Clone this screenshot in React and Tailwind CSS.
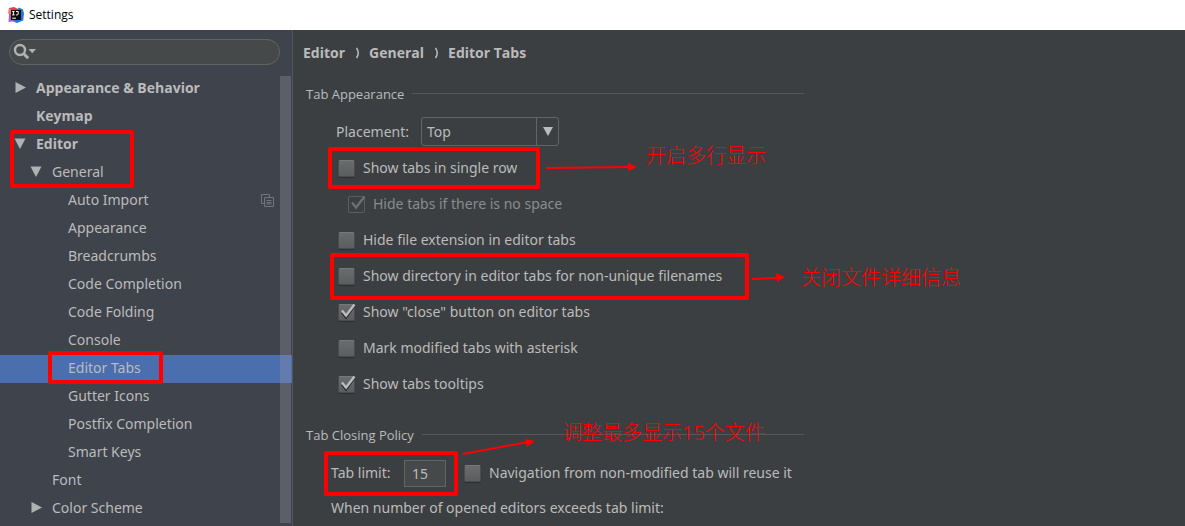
import { useState } from 'react';
import clsx from 'clsx';

const TREE = [
  { label: 'Appearance & Behavior', level: 0, state: 'closed' },
  { label: 'Keymap', level: 0 },
  { label: 'Editor', level: 0, state: 'open' },
  { label: 'General', level: 1, state: 'open' },
  { label: 'Auto Import', level: 2, project: true },
  { label: 'Appearance', level: 2 },
  { label: 'Breadcrumbs', level: 2 },
  { label: 'Code Completion', level: 2 },
  { label: 'Code Folding', level: 2 },
  { label: 'Console', level: 2 },
  { label: 'Editor Tabs', level: 2 },
  { label: 'Gutter Icons', level: 2 },
  { label: 'Postfix Completion', level: 2 },
  { label: 'Smart Keys', level: 2 },
  { label: 'Font', level: 1 },
  { label: 'Color Scheme', level: 1, state: 'closed' },
];

const INDENT = ['pl-3', 'pl-7', 'pl-11'];

const OPTIONS = [
  { id: 'single-row', label: 'Show tabs in single row' },
  { id: 'hide-tabs', label: 'Hide tabs if there is no space', checked: true, disabled: true },
  { id: 'hide-ext', label: 'Hide file extension in editor tabs' },
  { id: 'directory', label: 'Show directory in editor tabs for non-unique filenames' },
  { id: 'close', label: 'Show "close" button on editor tabs', checked: true },
  { id: 'asterisk', label: 'Mark modified tabs with asterisk' },
  { id: 'tooltips', label: 'Show tabs tooltips', checked: true },
];

function Logo() {
  return (
    <svg width="16" height="16" viewBox="0 0 16 16">
      <path d="M1 1 6 0l5 2.500-3 7-7-1z" fill="#f5315f" />
      <path d="M1 1 0 6l2 3 2-5z" fill="#fd7a6a" />
      <path d="M1 7 .5 15l4-.5L9 16l-1-8z" fill="#a866c4" />
      <path d="M8.500 3 11 .5l4 2 1 4-.8 7L9 16l-3-2z" fill="#2277e8" />
      <rect x="3" y="3" width="10" height="10" fill="#0b0b0e" />
      <path d="M4.200 4.500h2.400M5.400 4.500v3.400M4.200 7.900h2.400M8 4.500h2.200v2.500q0 .9-.9.9H7.900" stroke="#fff" strokeWidth="1" fill="none" />
      <path d="M4.200 11.200h3.800" stroke="#fff" strokeWidth="1" />
    </svg>
  );
}

function Arrow({ state }) {
  return (
    <svg width="16" height="16" viewBox="0 0 16 16" className="shrink-0" fill="#b0b1b3">
      {state === 'closed' && <path d="M3.500 2 14 7.500 3.500 13z" />}
      {state === 'open' && <path d="M2.500 2.500h11L8 13z" />}
    </svg>
  );
}

function ProjectIcon() {
  return (
    <svg width="13" height="13" viewBox="0 0 13 13" fill="none" stroke="#71757c">
      <path d="M3.500 9.500h-3v-9h8v3" />
      <path d="M3.500 3.500h9v9h-9zM5.500 6.500h5M5.500 8.500h5M5.500 10h5" />
    </svg>
  );
}

function Chevron() {
  return (
    <svg width="8" height="14" viewBox="0 0 8 14" fill="none" stroke="#bbbbbb" strokeWidth="1.500">
      <path d="M3.500 2q3.500 5 0 10" />
    </svg>
  );
}

function TreeRow({ item, selected, onSelect }) {
  return (
    <li>
      <button
        type="button"
        onClick={onSelect}
        className={clsx(
          'flex h-7 w-full items-center gap-2 pr-[18px] pb-0.5 text-left',
          INDENT[item.level],
          item.level === 0 && "font-['Open_Sans',sans-serif] font-bold",
          selected && 'bg-[#4b6eaf]'
        )}
      >
        <Arrow state={item.state} />
        <span className="flex-1">{item.label}</span>
        {item.project && <ProjectIcon />}
      </button>
    </li>
  );
}

function Checkbox({ id, label, checked, disabled }) {
  const [on, setOn] = useState(Boolean(checked));
  return (
    <div className={clsx('flex h-9 items-center gap-2', disabled && 'pl-[10px] text-[#8a8c8d]')}>
      <span className="relative size-[17px]">
        <input
          id={id}
          type="checkbox"
          checked={on}
          disabled={disabled}
          onChange={e => setOn(e.target.checked)}
          className={clsx(
            'block size-[17px] appearance-none rounded-xs border',
            disabled
              ? 'border-[#5b5e60]'
              : 'border-[#4a4c4e] border-t-[#75777a] bg-linear-to-b from-[#6a6b6c] to-[#5c5d5e] shadow-[0_1px_1px_#2d2f30]'
          )}
        />
        {on && (
          <svg width="18" height="18" viewBox="0 0 18 18" fill="none" className="pointer-events-none absolute -top-px left-0">
            {!disabled && <path d="M4 9.500 8 14.500 16.500 2.500" stroke="#2a2b2c" strokeWidth="2.400" />}
            <path d="M4 7.500 8 12.500 16.500 1.500" stroke={disabled ? '#6c6e70' : '#bdbdbd'} strokeWidth="2.400" />
          </svg>
        )}
      </span>
      <label htmlFor={id}>{label}</label>
    </div>
  );
}

function SectionTitle({ children }) {
  return (
    <div className="flex items-center gap-2">
      <h2 className="font-['Open_Sans',sans-serif] text-[13px] leading-5">{children}</h2>
      <span className="mb-0.5 h-px flex-1 bg-[#555759]" />
    </div>
  );
}

// red boxes, arrows and notes drawn over the dialog
function Annotations() {
  return (
    <div className="pointer-events-none absolute inset-0 text-[20px] leading-6 font-light text-[#ff0000]">
      <div className="absolute left-[10px] top-[130px] h-[58px] w-[124px] rounded-xs border-4 border-[#ff0000]" />
      <div className="absolute left-[48px] top-[351px] h-[33px] w-[115px] rounded-xs border-4 border-[#ff0000]" />
      <div className="absolute left-[328px] top-[147px] h-[42px] w-[212px] rounded-xs border-4 border-[#ff0000]" />
      <div className="absolute left-[330px] top-[253px] h-[47px] w-[419px] rounded-xs border-4 border-[#ff0000]" />
      <div className="absolute left-[324px] top-[451px] h-[45px] w-[134px] rounded-xs border-4 border-[#ff0000]" />
      <svg width="850" height="500" className="absolute left-0 top-0" stroke="#ff0000" strokeWidth="2" fill="#ff0000">
        <path d="M546 168 630 167M752 279 778 278M463 454 528 442" />
        <path stroke="none" d="M637 167 628 163v8zM785 277l-9-4 1 9zM535 441l-10-2 2 8z" />
      </svg>
      <p className="absolute left-[646px] top-[144px]">开启多行显示</p>
      <p className="absolute left-[801px] top-[266px]">关闭文件详细信息</p>
      <p className="absolute left-[562px] top-[421px]">调整最多显示15个文件</p>
    </div>
  );
}

export default function App() {
  const [selected, setSelected] = useState('Editor Tabs');
  const [limit, setLimit] = useState('15');

  return (
    <div className="relative flex min-h-screen flex-col bg-[#3c3f41] font-['Noto_Sans','Noto_Sans_CJK_SC',sans-serif] text-[14px] leading-5 text-[#bbbbbb]">
      <header className="flex h-[30px] items-center gap-[5px] bg-white pl-2 font-['Open_Sans',sans-serif] text-[12px] text-black">
        <Logo />
        <h1>Settings</h1>
      </header>

      <div className="flex flex-1">
        <aside className="flex w-[293px] shrink-0 flex-col border-r border-[#555555] bg-[#3f434c]">
          <div className="relative mt-[9px] mr-3 mb-[10px] ml-[9px]">
            <input
              type="search"
              aria-label="Search settings"
              className="block h-[26px] w-full rounded-full border border-[#646464] bg-[#45494a] pl-8 outline-none"
            />
            <svg width="24" height="18" viewBox="0 0 24 18" className="absolute left-1 top-1" fill="none">
              <circle cx="7" cy="7" r="5" stroke="#afb1b3" strokeWidth="2.400" />
              <path d="M10.500 10.500 15.200 15.200" stroke="#afb1b3" strokeWidth="3" />
              <path d="M15.500 6h7.500L19.200 10.200z" fill="#afb1b3" />
            </svg>
          </div>
          <nav className="relative">
            <ul>
              {TREE.map(item => (
                <TreeRow
                  key={item.label}
                  item={item}
                  selected={selected === item.label}
                  onSelect={() => setSelected(item.label)}
                />
              ))}
            </ul>
            <span className="absolute right-px top-px bottom-0 w-[11px] bg-[#a0a0a8]/30" />
          </nav>
        </aside>

        <main className="flex-1 pl-[10px] pt-[13px]">
          <nav className="flex items-center gap-2 font-['Open_Sans',sans-serif] font-bold">
            <a href="#editor">Editor</a>
            <Chevron />
            <a href="#general">General</a>
            <Chevron />
            <a href="#tabs">Editor Tabs</a>
          </nav>

          <section className="mt-[21px] ml-[3px] max-w-[498px]">
            <SectionTitle>Tab Appearance</SectionTitle>
            <div className="mt-[13px] flex items-center pl-[30px]">
              <label htmlFor="placement" className="w-[85px]">Placement:</label>
              <div className="relative w-[138px]">
                <select
                  id="placement"
                  className="block h-[29px] w-full appearance-none rounded-[3px] border border-[#646464] bg-[#3c3f41] pl-[5px] outline-none"
                >
                  <option>Top</option>
                  <option>Bottom</option>
                  <option>Left</option>
                  <option>Right</option>
                  <option>None</option>
                </select>
                <span className="pointer-events-none absolute inset-y-0 right-0 flex w-[23px] items-center justify-center border-l border-[#646464]">
                  <svg width="10" height="9" viewBox="0 0 10 9" fill="#bbbbbb">
                    <path d="M0 0h10L5 9z" />
                  </svg>
                </span>
              </div>
            </div>
            <div className="mt-1 pl-8">
              {OPTIONS.map(o => (
                <Checkbox key={o.id} {...o} />
              ))}
            </div>
          </section>

          <section className="mt-[23px] ml-[3px] max-w-[498px]">
            <SectionTitle>Tab Closing Policy</SectionTitle>
            <div className="mt-[10px] flex items-center pl-[25px] whitespace-nowrap">
              <label htmlFor="limit" className="w-[73px]">Tab limit:</label>
              <input
                id="limit"
                type="text"
                value={limit}
                onChange={e => setLimit(e.target.value)}
                className="mr-[18px] h-[27px] w-[42px] border border-[#646464] bg-[#45494a] pl-[7px] outline-none"
              />
              <Checkbox id="reuse" label="Navigation from non-modified tab will reuse it" />
            </div>
            <p className="mt-[7px] pl-[25px]">When number of opened editors exceeds tab limit:</p>
          </section>
        </main>
      </div>

      <Annotations />
    </div>
  );
}
